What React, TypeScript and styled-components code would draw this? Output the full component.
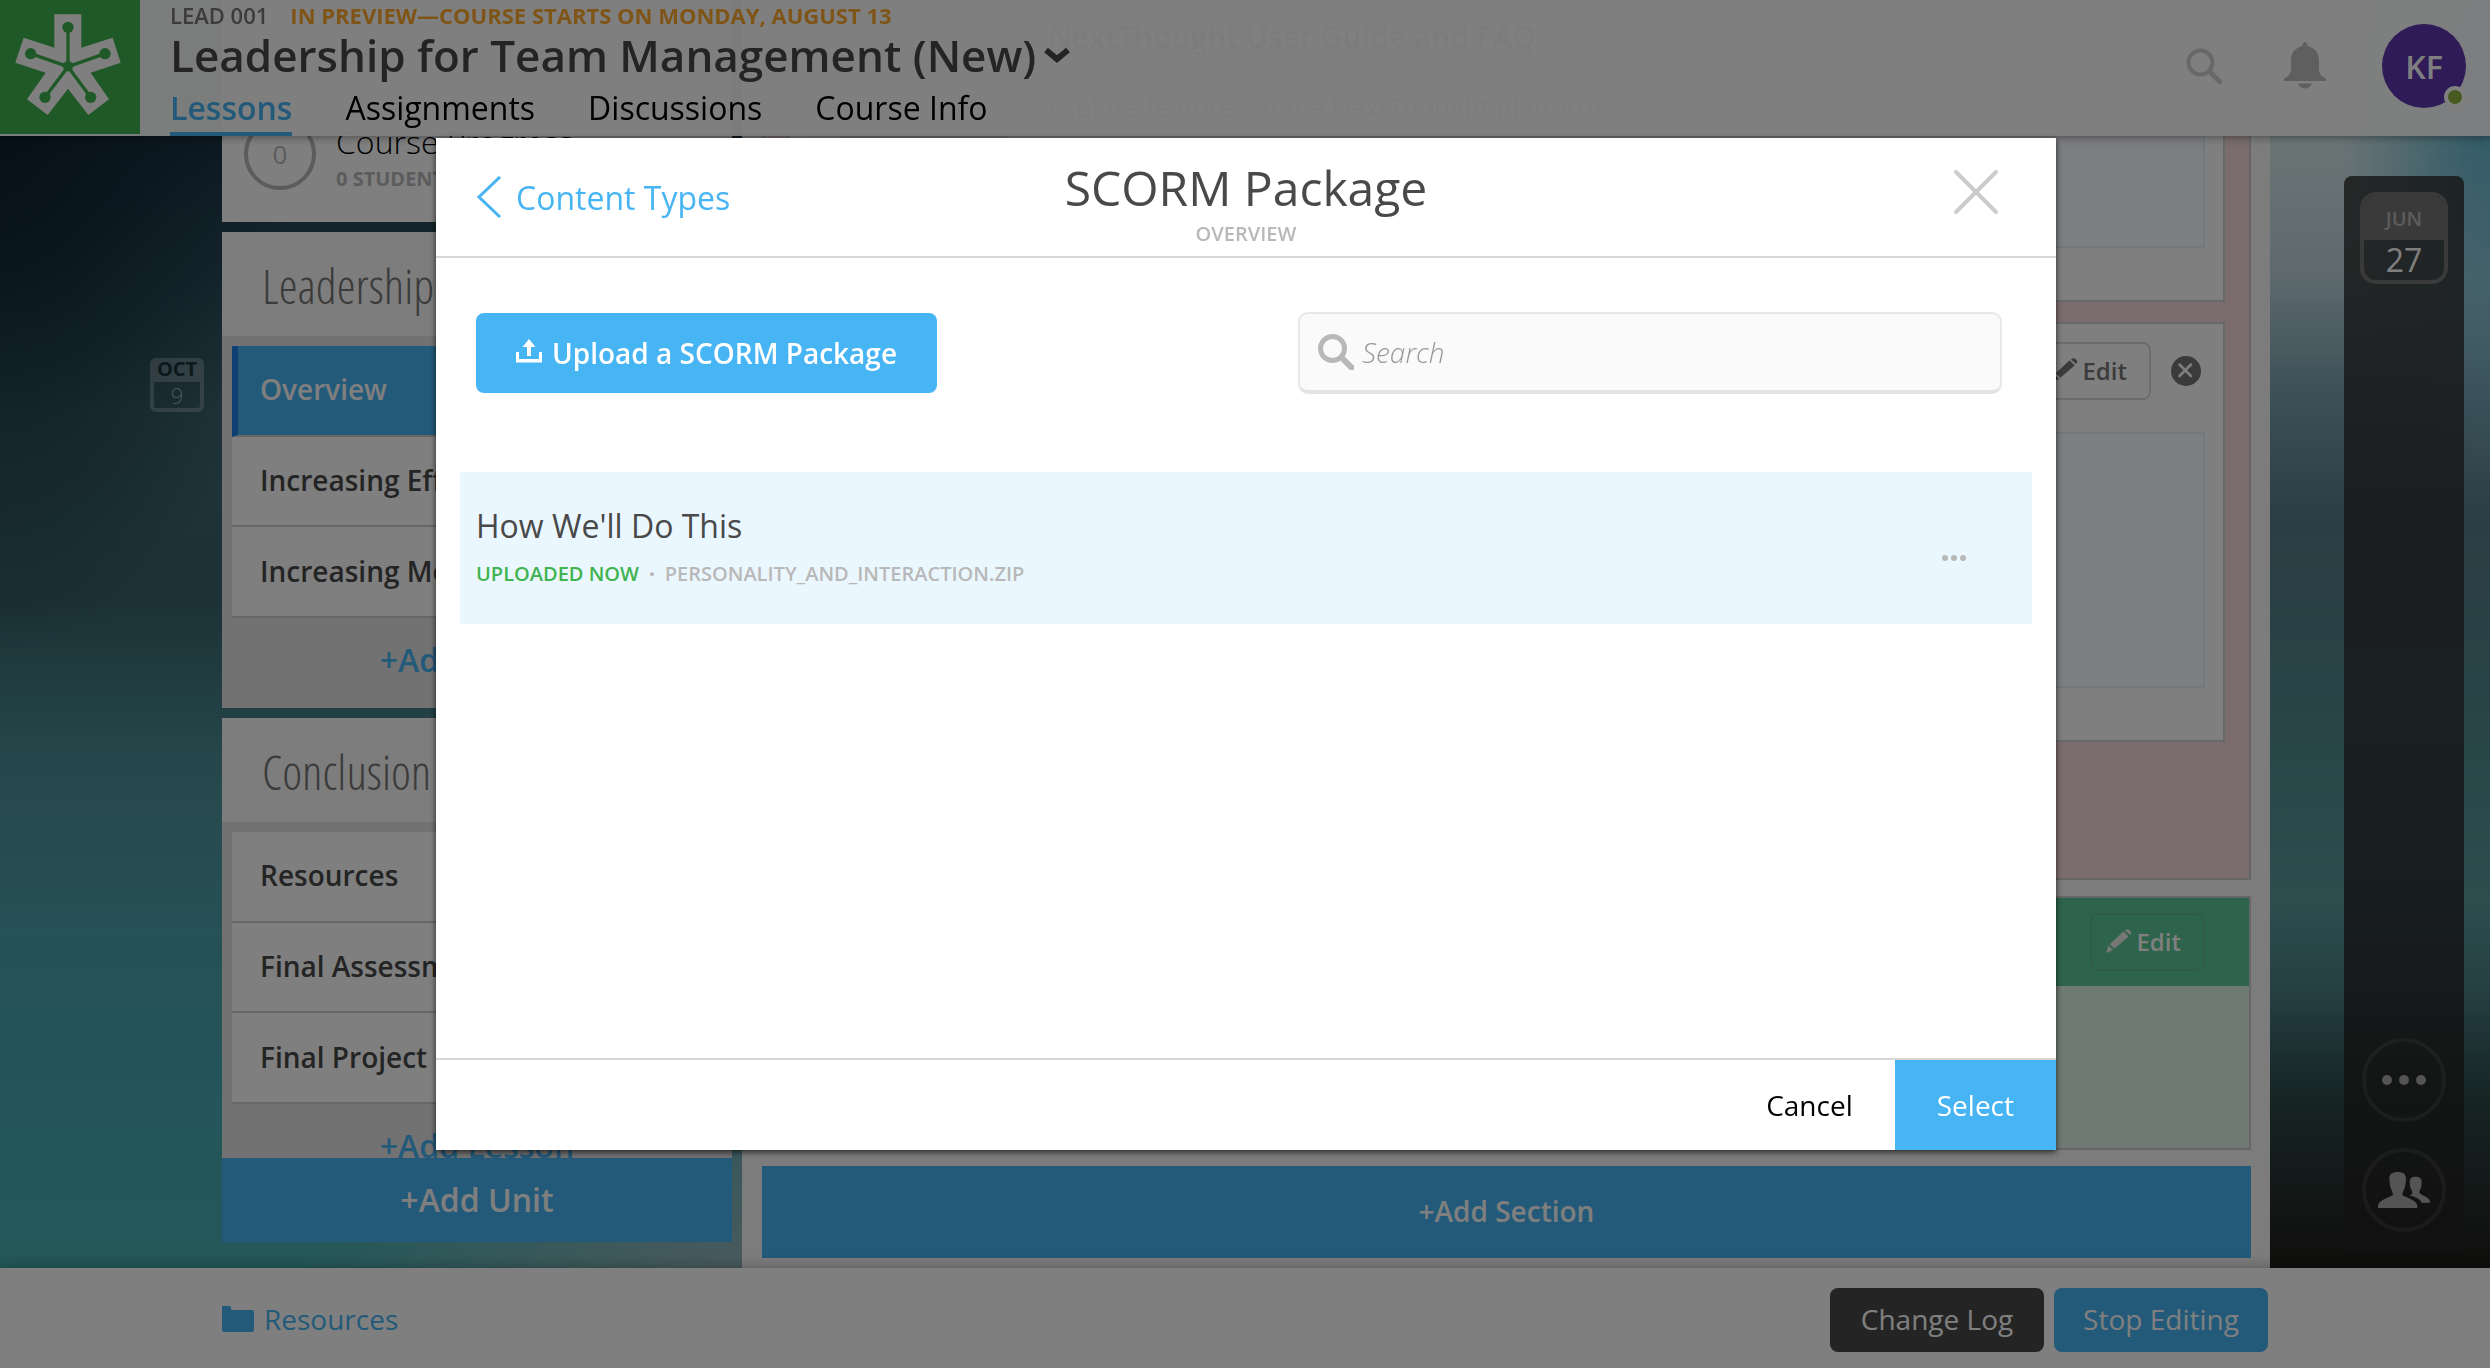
import React from 'react';
import styled, { createGlobalStyle } from 'styled-components';

const BLUE = '#47b4f3';
const INK = '#494949';

const GlobalStyle = createGlobalStyle`
  *, *::before, *::after { box-sizing: border-box; }
  html, body { margin: 0; padding: 0; }
  body {
    font-family: "Open Sans", "Noto Sans", sans-serif;
    font-size: 28px;
    color: ${INK};
    overflow: hidden;
  }
  h1, h2, h3, p, ul { margin: 0; padding: 0; font-weight: inherit; font-size: inherit; }
  ul { list-style: none; }
  a { color: inherit; text-decoration: none; }
  button, input { font: inherit; color: inherit; margin: 0; border: 0; background: none; }
  button { padding: 0; cursor: pointer; }
  svg { display: block; flex: none; }
`;

const Page = styled.div`
  display: grid;
  grid-template-rows: minmax(0, 1fr) 100px;
  height: 100vh;
  background:
    radial-gradient(ellipse 24% 40% at 0% 8%, #0c2030 0%, rgba(12, 32, 48, 0) 100%) no-repeat left / 50% 100%,
    radial-gradient(ellipse 36% 22% at 60% 94%, #96b4ba 0%, rgba(150, 180, 186, 0) 100%) no-repeat left / 50% 100%,
    linear-gradient(180deg, #1c3040 8%, #223e50 12%, #3f6872 30%, #38646c 44%, #4c9098 56%, #4ca2ac 68%, #46aab4 80%, #48b0b2 92%) no-repeat left / 50% 100%,
    radial-gradient(ellipse 12% 26% at 100% 8%, #5cb4ce 0%, rgba(92, 180, 206, 0) 100%) no-repeat right / 50% 100%,
    linear-gradient(180deg, #dceeee 8%, #bcd4dc 20%, #78a0ae 29%, #587c8a 38%, #50888e 51%, #5a9a9e 66%, #4c8288 72%, #2e4a4a 80%, #201f1c 92%) no-repeat right / 50% 100%;
`;

/* ---------- Top bar ---------- */

const TopBar = styled.header`
  position: fixed;
  inset: 0 0 auto 0;
  z-index: 2;
  display: flex;
  height: 136px;
  background: rgba(255, 255, 255, 0.97);
  box-shadow: 0 2px 8px rgba(0, 0, 0, 0.35);
`;

const LogoLink = styled.a`
  flex: none;
  width: 140px;
  height: 134px;
  background: #40b250;
`;

const CourseHeading = styled.div`
  display: flex;
  flex-direction: column;
  flex: 1;
  padding-left: 30px;
`;

const CourseMeta = styled.p`
  display: flex;
  gap: 22px;
  padding-bottom: 2px;
  font-size: 22px;
  font-weight: 600;
  line-height: 30px;
  color: #777;
`;

const PreviewNote = styled.span`
  color: #ffab2e;
  font-weight: 700;
`;

const CourseTitle = styled.button`
  display: flex;
  align-items: center;
  gap: 8px;
  align-self: flex-start;
  font-size: 44px;
  font-weight: 600;
  line-height: 46px;
`;

const Tabs = styled.nav`
  display: flex;
  gap: 53px;
  flex: 1;
`;

const Tab = styled.a<{ $active?: boolean }>`
  padding-top: 6px;
  font-size: 32px;
  line-height: 48px;
  font-weight: ${(p) => (p.$active ? 600 : 400)};
  color: ${(p) => (p.$active ? BLUE : '#000')};
  border-bottom: 4px solid ${(p) => (p.$active ? BLUE : 'transparent')};
`;

const UserTools = styled.div`
  display: flex;
  align-items: center;
  gap: 56px;
  padding: 0 24px 4px 0;
`;

const SearchButton = styled.button`
  padding-right: 6px;
`;

const Avatar = styled.button`
  position: relative;
  width: 84px;
  height: 84px;
  border-radius: 50%;
  background: #5e36ae;
  color: #fff;
  font-size: 32px;
  font-weight: 600;
`;

const Presence = styled.span`
  position: absolute;
  right: 0;
  bottom: 0;
  width: 22px;
  height: 22px;
  border: 4px solid #fff;
  border-radius: 50%;
  background: #8eb642;
`;

/* ---------- Workspace ---------- */

const Workspace = styled.div`
  display: grid;
  grid-template-columns: minmax(0, 1fr) minmax(0, 2048px) minmax(0, 1fr);
  min-height: 0;
  padding-left: 2px;
`;

const LeftGutter = styled.div`
  display: flex;
  justify-content: flex-end;
  align-items: flex-start;
  padding: 358px 18px 0 0;
`;

const DateMarker = styled.div`
  width: 54px;
  height: 54px;
  border-radius: 6px;
  overflow: hidden;
  text-align: center;
`;

const MarkerMonth = styled.div`
  height: 24px;
  background: rgba(255, 255, 255, 0.26);
  color: #16303a;
  font-size: 20px;
  font-weight: 700;
  line-height: 22px;
`;

const MarkerDay = styled.div`
  height: 30px;
  border: 4px solid rgba(255, 255, 255, 0.26);
  border-top: 0;
  border-radius: 0 0 6px 6px;
  color: #8fb2b8;
  font-size: 22px;
  font-weight: 300;
  line-height: 26px;
`;

const Columns = styled.div`
  display: grid;
  grid-template-columns: 510px minmax(0, 1fr);
  gap: 10px;
  min-height: 0;
`;

const Sidebar = styled.aside`
  display: flex;
  flex-direction: column;
  min-height: 0;
  padding-bottom: 26px;
`;

const SidebarScroll = styled.div`
  display: flex;
  flex-direction: column;
  gap: 10px;
  flex: 1;
  min-height: 0;
  overflow: hidden;
`;

const ProgressCard = styled.section`
  display: flex;
  flex: none;
  gap: 20px;
  height: 222px;
  padding: 118px 22px 0;
  background: #fff;
`;

const ProgressRing = styled.div`
  display: grid;
  place-items: center;
  width: 72px;
  height: 72px;
  border: 4px solid #b8b8b8;
  border-radius: 50%;
  color: #b8b8b8;
  font-size: 26px;
`;

const ProgressText = styled.div`
  padding-top: 4px;
`;

const ProgressTitle = styled.h2`
  color: #000;
  font-size: 32px;
  font-weight: 300;
  line-height: 40px;
`;

const ProgressNote = styled.p`
  color: #b8b8b8;
  font-size: 20px;
  font-weight: 700;
  line-height: 34px;
`;

const UnitCard = styled.section`
  flex: none;
  background: #e4e4e4;
`;

const UnitTitle = styled.h2`
  padding: 4px 40px 0;
  background: #fafafa;
  color: #777;
  font-family: "Open Sans Condensed Light", "Open Sans Cond Light", "OpenSans-CondensedLight", "OpenSans-CondLight", "Open Sans Condensed", "Open Sans", sans-serif;
  font-size: 48px;
  font-weight: 300;
  line-height: 100px;
  white-space: nowrap;
`;

const LessonList = styled.ul`
  display: grid;
  grid-auto-rows: 1fr;
  height: 272px;
  margin: 10px 10px 0;
`;

const Lesson = styled.li<{ $active?: boolean }>`
  display: flex;
  align-items: center;
  padding: 0 0 2px ${(p) => (p.$active ? '22px' : '28px')};
  border-left: ${(p) => (p.$active ? '6px solid #1f7fe6' : '0')};
  border-bottom: 2px solid #ccc;
  background: ${(p) => (p.$active ? BLUE : '#fff')};
  color: ${(p) => (p.$active ? '#fff' : INK)};
  font-weight: 600;
`;

const AddLesson = styled.button`
  display: block;
  width: 100%;
  height: 90px;
  padding-bottom: 8px;
  color: ${BLUE};
  font-size: 32px;
  font-weight: 600;
`;

const BlueBar = styled.button<{ $size: number; $height: number }>`
  flex: none;
  height: ${(p) => p.$height}px;
  padding-bottom: 2px;
  background: ${BLUE};
  color: #fff;
  font-size: ${(p) => p.$size}px;
  font-weight: 600;
`;

const Editor = styled.main`
  display: flex;
  flex-direction: column;
  gap: 16px;
  min-height: 0;
  padding: 0 19px 0 20px;
  background: #f9f9f9;
`;

const PinkSection = styled.section`
  display: flex;
  flex-direction: column;
  flex: none;
  gap: 20px;
  height: 880px;
  padding: 0 24px;
  border: 2px solid #ccc;
  border-top: 0;
  background: #f6dada;
`;

const ResourceCard = styled.article<{ $height: number }>`
  display: flex;
  flex-direction: column;
  flex: none;
  height: ${(p) => p.$height}px;
  padding: 0 18px 52px;
  border: 2px solid #ccd2ce;
  background: #fff;
`;

const CardTools = styled.div`
  display: flex;
  align-items: center;
  justify-content: flex-end;
  gap: 20px;
  height: 108px;
  padding: 0 4px 14px 0;
`;

const ResourcePreview = styled.div`
  display: flex;
  gap: 40px;
  flex: 1;
  min-height: 0;
  padding-left: 30px;
  border: 2px solid #e4f0f8;
  background: #fafcff;
`;

const Thumbnail = styled.div`
  width: 168px;
  height: 150px;
  background: #dfe9f4;
`;

const ResourceTitle = styled.h3`
  font-size: 30px;
  font-weight: 600;
  line-height: 66px;
`;

const ResourceAuthor = styled.p`
  color: #b8b8b8;
  font-size: 18px;
  line-height: 4px;
`;

const ResourceSummary = styled.p`
  font-size: 26px;
  line-height: 66px;
`;

const EditButton = styled.button<{ $light?: boolean }>`
  display: flex;
  align-items: center;
  gap: 4px;
  height: 58px;
  padding: 0 22px 2px 14px;
  border: 2px solid ${(p) => (p.$light ? 'rgba(120, 120, 120, 0.2)' : '#d8d8d8')};
  border-radius: 8px;
  color: ${(p) => (p.$light ? '#fff' : '#777')};
  font-size: 24px;
  font-weight: 600;
`;

const GreenSection = styled.section`
  display: flex;
  flex-direction: column;
  flex: none;
  height: 254px;
  border: 2px solid #ccc;
  background: #e0f4ea;
`;

const GreenHeader = styled.div`
  display: flex;
  align-items: center;
  justify-content: flex-end;
  height: 88px;
  padding-right: 44px;
  background: #5cc896;
`;

const RightGutter = styled.div`
  display: flex;
  min-height: 0;
  padding: 176px 26px 16px;
  justify-content: flex-end;
`;

const Rail = styled.aside`
  display: flex;
  flex-direction: column;
  align-items: center;
  gap: 26px;
  width: 120px;
  padding: 16px 0 20px;
  border-radius: 8px;
  background: linear-gradient(rgba(46, 46, 46, 0.82) 50%, rgba(34, 34, 34, 0.9));
`;

const Today = styled.div`
  width: 88px;
  height: 92px;
  margin-bottom: auto;
  border: 4px solid #747474;
  border-radius: 16px;
  overflow: hidden;
  text-align: center;
`;

const TodayMonth = styled.div`
  height: 44px;
  background: #747474;
  color: #b8b8b8;
  font-size: 20px;
  font-weight: 600;
  line-height: 46px;
`;

const TodayDay = styled.div`
  color: #fff;
  font-size: 32px;
  line-height: 40px;
`;

const RailButton = styled.button`
  display: grid;
  place-items: center;
  width: 84px;
  height: 84px;
  border: 4px solid rgba(255, 255, 255, 0.09);
  border-radius: 50%;
`;

/* ---------- Bottom bar ---------- */

const BottomBar = styled.footer`
  position: relative;
  display: flex;
  justify-content: center;
  background: #fff;
  box-shadow: 0 -2px 12px rgba(0, 0, 0, 0.25);
`;

const BottomInner = styled.div`
  display: flex;
  align-items: center;
  gap: 10px;
  width: 100%;
  max-width: 2046px;
  padding-top: 4px;
`;

const ResourcesLink = styled.a`
  display: flex;
  align-items: center;
  gap: 10px;
  margin-right: auto;
  padding-bottom: 2px;
  color: ${BLUE};
`;

const BottomButton = styled.button<{ $dark?: boolean }>`
  width: 214px;
  height: 64px;
  padding-bottom: 2px;
  border-radius: 8px;
  background: ${(p) => (p.$dark ? INK : BLUE)};
  color: #fff;
`;

/* ---------- Dialog ---------- */

const Overlay = styled.div`
  position: fixed;
  inset: 0;
  z-index: 3;
  display: flex;
  justify-content: center;
  align-items: flex-start;
  padding: 138px 0 0 2px;
  background: rgba(0, 0, 0, 0.5);
`;

const Dialog = styled.section`
  display: flex;
  flex-direction: column;
  width: 1620px;
  max-width: 92vw;
  height: calc(100vh - 356px);
  background: #fff;
  box-shadow: 0 2px 6px rgba(0, 0, 0, 0.7);
`;

const DialogHeader = styled.header`
  display: grid;
  grid-template-columns: 1fr auto 1fr;
  height: 120px;
  border-bottom: 2px solid #d8d8d8;
`;

const BackButton = styled.button`
  display: flex;
  align-items: center;
  gap: 14px;
  justify-self: start;
  padding-left: 40px;
  color: ${BLUE};
  font-size: 32px;
`;

const DialogTitles = styled.div`
  padding-top: 20px;
  text-align: center;
`;

const DialogTitle = styled.h1`
  font-size: 48px;
  line-height: 60px;
`;

const DialogSubtitle = styled.p`
  color: #b8b8b8;
  font-size: 20px;
  font-weight: 600;
  line-height: 32px;
`;

const CloseButton = styled.button`
  justify-self: end;
  align-self: start;
  margin: 32px 58px 0 0;
`;

const DialogToolbar = styled.div`
  display: flex;
  align-items: center;
  justify-content: space-between;
  padding: 54px 54px 78px 40px;
`;

const UploadButton = styled.button`
  display: flex;
  align-items: center;
  justify-content: center;
  gap: 10px;
  height: 80px;
  padding: 0 40px;
  border-radius: 8px;
  background: ${BLUE};
  color: #fff;
  font-weight: 600;
`;

const SearchBox = styled.label`
  display: flex;
  align-items: center;
  gap: 8px;
  width: 704px;
  height: 82px;
  padding: 0 18px;
  border: 2px solid #e8e8e8;
  border-bottom: 4px solid #e4e4e4;
  border-radius: 10px;
  background: #fafafa;
`;

const SearchInput = styled.input`
  flex: 1;
  min-width: 0;
  padding: 0;
  outline: none;
  &::placeholder {
    color: #999;
    font-style: italic;
    font-weight: 300;
    opacity: 1;
  }
`;

const PackageList = styled.ul`
  flex: 1;
  margin: 0 24px;
`;

const PackageRow = styled.li`
  display: flex;
  align-items: center;
  justify-content: space-between;
  height: 152px;
  padding: 4px 66px 0 16px;
  background: #ebf7fe;
`;

const PackageName = styled.h3`
  font-size: 32px;
  line-height: 48px;
`;

const PackageMeta = styled.p`
  display: flex;
  gap: 10px;
  color: #b8b8b8;
  font-size: 20px;
  font-weight: 600;
  line-height: 48px;
`;

const Separator = styled.span`
  font-weight: 800;
`;

const Uploaded = styled.span`
  color: #40b450;
`;

const MoreButton = styled.button`
  margin-top: 16px;
`;

const DialogFooter = styled.footer`
  display: flex;
  justify-content: flex-end;
  flex: none;
  height: 92px;
  border-top: 2px solid #d8d8d8;
`;

const FooterButton = styled.button<{ $primary?: boolean }>`
  padding: 0 42px;
  background: ${(p) => (p.$primary ? BLUE : 'transparent')};
  color: ${(p) => (p.$primary ? '#fff' : '#000')};
`;

/* ---------- Drawings ---------- */

const LogoMark = () => (
  <svg width="140" height="134" viewBox="0 0 420 402" aria-hidden="true">
    <path
      fill="#fff"
      d="M163 43H244V143L338 113L362 188L272 218L327 298L265 345L204 266L143 345L81 298L137 218L46 188L71 113L163 143Z"
    />
    <g stroke="#40b250" strokeWidth="10">
      <path d="M204 200V82M204 200L92 161M204 200L315 161M204 200L135 292M204 200L272 292" />
    </g>
    <g fill="#40b250">
      <path d="M204 180L222 193L215 214H193L186 193Z" />
      <circle cx="204" cy="82" r="17" />
      <circle cx="92" cy="161" r="17" />
      <circle cx="315" cy="161" r="17" />
      <circle cx="135" cy="292" r="17" />
      <circle cx="272" cy="292" r="17" />
    </g>
  </svg>
);

const ChevronDown = () => (
  <svg width="26" height="16" viewBox="0 0 26 16" fill="none" stroke={INK} strokeWidth="6" aria-hidden="true">
    <path d="M2 3L13 12L24 3" />
  </svg>
);

const Magnifier = ({ color, width }: { color: string; width: number }) => (
  <svg width="36" height="36" viewBox="0 0 36 36" fill="none" stroke={color} aria-hidden="true">
    <circle cx="14.5" cy="14.5" r="12" strokeWidth={width} />
    <path d="M24 24L34 34" strokeWidth={width + 1} strokeLinecap="round" />
  </svg>
);

const Bell = () => (
  <svg width="42" height="48" viewBox="0 0 42 48" fill="#bfbfbf" aria-hidden="true">
    <path d="M21 0C22.6 0 23.4 2 24 4.300C31.500 6 35 11.500 35 18.500V26C35 31.500 37.500 35 42 36.500V39H0V36.500C4.500 35 7 31.500 7 26V18.500C7 11.500 10.500 6 18 4.300C18.600 2 19.400 0 21 0Z" />
    <path d="M14 41.500H28C26.500 45 24 46.500 21 46.500S15.500 45 14 41.500Z" />
  </svg>
);

const Pencil = ({ color }: { color: string }) => (
  <svg width="26" height="24" viewBox="0 0 28 26" fill={color} aria-hidden="true">
    <path d="M19 2.500L24.500 8L9 21.500L4 16.500Z" />
    <path d="M20.500 1.500Q23 -1 26 1.500Q28.500 4 26 6.500Z" />
    <path d="M2.500 17.800L7.600 22.700L0 26Z" />
  </svg>
);

const CircleX = () => (
  <svg width="30" height="30" viewBox="0 0 30 30" aria-hidden="true">
    <circle cx="15" cy="15" r="15" fill="#777" />
    <path d="M8.500 8.500L20 20M20 8.500L8.500 20" stroke="#fff" strokeWidth="2.500" strokeLinecap="round" />
  </svg>
);

const Dots = ({ color, width, radius }: { color: string; width: number; radius: number }) => (
  <svg width={width} height={radius * 2} viewBox={`0 0 ${width} ${radius * 2}`} fill={color} aria-hidden="true">
    <circle cx={radius} cy={radius} r={radius} />
    <circle cx={width / 2} cy={radius} r={radius} />
    <circle cx={width - radius} cy={radius} r={radius} />
  </svg>
);

const People = () => (
  <svg width="52" height="38" viewBox="0 0 156 112" fill="#a8a8a8" aria-hidden="true">
    <path d="M59 2C75 2 84 8 84 22L82 42C80 54 74 60 73 70C76 77 118 84 118 104V110H0V104C0 84 42 77 45 70C44 60 38 54 36 42L34 22C34 8 43 2 59 2Z" />
    <path d="M113 16C126 16 131 22 131 32L130 44C129 52 124 57 124 64C128 71 156 78 156 90V94H131C126 82 110 77 94 72C98 70 103 69 103 64C103 57 97 52 96 44L95 32C95 22 100 16 113 16Z" />
  </svg>
);

const ChevronLeft = () => (
  <svg width="26" height="42" viewBox="0 0 26 42" fill="none" stroke={BLUE} strokeWidth="3" aria-hidden="true">
    <path d="M24 1L3 21L24 41" />
  </svg>
);

const Cross = () => (
  <svg width="44" height="44" viewBox="0 0 44 44" fill="none" stroke="#ccc" strokeWidth="4" strokeLinecap="round" aria-hidden="true">
    <path d="M2 2L42 42M42 2L2 42" />
  </svg>
);

const UploadIcon = () => (
  <svg width="26" height="28" viewBox="0 0 26 28" fill="#fff" aria-hidden="true">
    <path d="M13 0L19.500 8H15V17H11V8H6.500Z" />
    <path d="M0 13H3V20H23V13H26V23.500H0Z" />
  </svg>
);

const Folder = () => (
  <svg width="32" height="26" viewBox="0 0 32 26" fill={BLUE} aria-hidden="true">
    <path d="M0 0H8Q9 0 9.500 4H30Q32 4 32 6V24Q32 26 30 26H2Q0 26 0 24Z" />
  </svg>
);

/* ---------- Page parts ---------- */

const units = [
  { title: 'Leadership', lessons: ['Overview', 'Increasing Effectiveness', 'Increasing Motivation'], active: 0 },
  { title: 'Conclusion', lessons: ['Resources', 'Final Assessment', 'Final Project'], active: -1 },
];

const tabs = ['Lessons', 'Assignments', 'Discussions', 'Course Info'];

const Header = () => (
  <TopBar>
    <LogoLink href="#" aria-label="Home">
      <LogoMark />
    </LogoLink>
    <CourseHeading>
      <CourseMeta>
        <span>LEAD 001</span>
        <PreviewNote>IN PREVIEW—COURSE STARTS ON MONDAY, AUGUST 13</PreviewNote>
      </CourseMeta>
      <CourseTitle>
        Leadership for Team Management (New)
        <ChevronDown />
      </CourseTitle>
      <Tabs>
        {tabs.map((tab, i) => (
          <Tab key={tab} href="#" $active={i === 0}>
            {tab}
          </Tab>
        ))}
      </Tabs>
    </CourseHeading>
    <UserTools>
      <SearchButton aria-label="Search">
        <Magnifier color="#d0d0d0" width={4} />
      </SearchButton>
      <button aria-label="Notifications">
        <Bell />
      </button>
      <Avatar>
        KF
        <Presence />
      </Avatar>
    </UserTools>
  </TopBar>
);

const Outline = () => (
  <Sidebar>
    <SidebarScroll>
      <ProgressCard>
        <ProgressRing>0</ProgressRing>
        <ProgressText>
          <ProgressTitle>Course Progress</ProgressTitle>
          <ProgressNote>0 STUDENTS</ProgressNote>
        </ProgressText>
      </ProgressCard>
      {units.map((unit) => (
        <UnitCard key={unit.title}>
          <UnitTitle>{unit.title}</UnitTitle>
          <LessonList>
            {unit.lessons.map((lesson, i) => (
              <Lesson key={lesson} $active={i === unit.active}>
                {lesson}
              </Lesson>
            ))}
          </LessonList>
          <AddLesson>+Add Lesson</AddLesson>
        </UnitCard>
      ))}
    </SidebarScroll>
    <BlueBar $size={32} $height={84}>
      +Add Unit
    </BlueBar>
  </Sidebar>
);

const LessonEditor = () => (
  <Editor>
    <PinkSection>
      <ResourceCard $height={302}>
        <ResourcePreview>
          <Thumbnail />
          <div>
            <ResourceTitle>NextThought User Guide and FAQ</ResourceTitle>
            <ResourceAuthor>BY NEXTTHOUGHT</ResourceAuthor>
            <ResourceSummary>Explore features of the NextThought platform.</ResourceSummary>
          </div>
        </ResourcePreview>
      </ResourceCard>
      <ResourceCard $height={420}>
        <CardTools>
          <EditButton>
            <Pencil color="#777" />
            Edit
          </EditButton>
          <button aria-label="Remove">
            <CircleX />
          </button>
        </CardTools>
        <ResourcePreview />
      </ResourceCard>
    </PinkSection>
    <GreenSection>
      <GreenHeader>
        <EditButton $light>
          <Pencil color="#eee" />
          Edit
        </EditButton>
      </GreenHeader>
    </GreenSection>
    <BlueBar $size={28} $height={92}>
      +Add Section
    </BlueBar>
  </Editor>
);

const ScormDialog = () => (
  <Overlay>
    <Dialog role="dialog" aria-labelledby="dialog-title">
      <DialogHeader>
        <BackButton>
          <ChevronLeft />
          Content Types
        </BackButton>
        <DialogTitles>
          <DialogTitle id="dialog-title">SCORM Package</DialogTitle>
          <DialogSubtitle>OVERVIEW</DialogSubtitle>
        </DialogTitles>
        <CloseButton aria-label="Close">
          <Cross />
        </CloseButton>
      </DialogHeader>
      <DialogToolbar>
        <UploadButton>
          <UploadIcon />
          Upload a SCORM Package
        </UploadButton>
        <SearchBox>
          <Magnifier color="#b8b8b8" width={5} />
          <SearchInput type="search" placeholder="Search" aria-label="Search packages" />
        </SearchBox>
      </DialogToolbar>
      <PackageList>
        <PackageRow>
          <div>
            <PackageName>How We'll Do This</PackageName>
            <PackageMeta>
              <Uploaded>UPLOADED NOW</Uploaded>
              <Separator>·</Separator>
              <span>PERSONALITY_AND_INTERACTION.ZIP</span>
            </PackageMeta>
          </div>
          <MoreButton aria-label="More options">
            <Dots color="#b8b8b8" width={24} radius={3} />
          </MoreButton>
        </PackageRow>
      </PackageList>
      <DialogFooter>
        <FooterButton>Cancel</FooterButton>
        <FooterButton $primary>Select</FooterButton>
      </DialogFooter>
    </Dialog>
  </Overlay>
);

export default function App() {
  return (
    <Page>
      <GlobalStyle />
      <Header />
      <Workspace>
        <LeftGutter>
          <DateMarker>
            <MarkerMonth>OCT</MarkerMonth>
            <MarkerDay>9</MarkerDay>
          </DateMarker>
        </LeftGutter>
        <Columns>
          <Outline />
          <LessonEditor />
        </Columns>
        <RightGutter>
          <Rail>
            <Today>
              <TodayMonth>JUN</TodayMonth>
              <TodayDay>27</TodayDay>
            </Today>
            <RailButton aria-label="More">
              <Dots color="#a8a8a8" width={44} radius={5} />
            </RailButton>
            <RailButton aria-label="Contacts">
              <People />
            </RailButton>
          </Rail>
        </RightGutter>
      </Workspace>
      <BottomBar>
        <BottomInner>
          <ResourcesLink href="#">
            <Folder />
            Resources
          </ResourcesLink>
          <BottomButton $dark>Change Log</BottomButton>
          <BottomButton>Stop Editing</BottomButton>
        </BottomInner>
      </BottomBar>
      <ScormDialog />
    </Page>
  );
}
